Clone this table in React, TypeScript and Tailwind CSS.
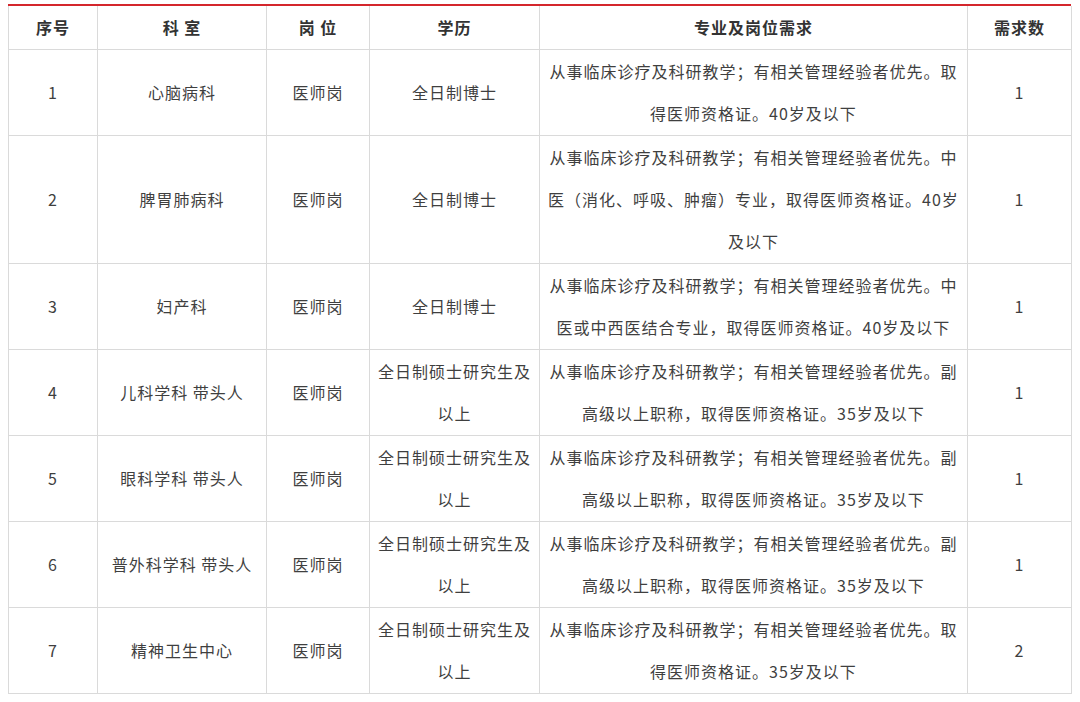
type Row = {
  no: string;
  dept: string;
  post: string;
  edu: string[];
  req: string[];
  count: string;
};

const rows: Row[] = [
  {
    no: "1",
    dept: "心脑病科",
    post: "医师岗",
    edu: ["全日制博士"],
    req: ["从事临床诊疗及科研教学；有相关管理经验者优先。取", "得医师资格证。40岁及以下"],
    count: "1",
  },
  {
    no: "2",
    dept: "脾胃肺病科",
    post: "医师岗",
    edu: ["全日制博士"],
    req: [
      "从事临床诊疗及科研教学；有相关管理经验者优先。中",
      "医（消化、呼吸、肿瘤）专业，取得医师资格证。40岁",
      "及以下",
    ],
    count: "1",
  },
  {
    no: "3",
    dept: "妇产科",
    post: "医师岗",
    edu: ["全日制博士"],
    req: ["从事临床诊疗及科研教学；有相关管理经验者优先。中", "医或中西医结合专业，取得医师资格证。40岁及以下"],
    count: "1",
  },
  {
    no: "4",
    dept: "儿科学科 带头人",
    post: "医师岗",
    edu: ["全日制硕士研究生及", "以上"],
    req: ["从事临床诊疗及科研教学；有相关管理经验者优先。副", "高级以上职称，取得医师资格证。35岁及以下"],
    count: "1",
  },
  {
    no: "5",
    dept: "眼科学科 带头人",
    post: "医师岗",
    edu: ["全日制硕士研究生及", "以上"],
    req: ["从事临床诊疗及科研教学；有相关管理经验者优先。副", "高级以上职称，取得医师资格证。35岁及以下"],
    count: "1",
  },
  {
    no: "6",
    dept: "普外科学科 带头人",
    post: "医师岗",
    edu: ["全日制硕士研究生及", "以上"],
    req: ["从事临床诊疗及科研教学；有相关管理经验者优先。副", "高级以上职称，取得医师资格证。35岁及以下"],
    count: "1",
  },
  {
    no: "7",
    dept: "精神卫生中心",
    post: "医师岗",
    edu: ["全日制硕士研究生及", "以上"],
    req: ["从事临床诊疗及科研教学；有相关管理经验者优先。取", "得医师资格证。35岁及以下"],
    count: "2",
  },
];

const cell = "border border-[#dadada] text-center align-middle p-0";

function Lines({ lines }: { lines: string[] }) {
  return (
    <>
      {lines.map((l, i) => (
        <span key={i} className="block whitespace-nowrap">
          {l}
        </span>
      ))}
    </>
  );
}

export default function App() {
  return (
    <div
      className="min-h-screen bg-white pt-[4px] pl-[8px] text-[16px] leading-[42px] tracking-[1px] text-[#3f3f3f]"
      style={{ fontFamily: '"Noto Sans CJK SC", "Noto Sans", sans-serif' }}
    >
      <div className="w-[1063px]">
        <div className="h-[2px] bg-[#d4262c]" />
        <table className="w-[1063px] table-fixed border-collapse">
          <colgroup>
            <col className="w-[89px]" />
            <col className="w-[169px]" />
            <col className="w-[103px]" />
            <col className="w-[170px]" />
            <col className="w-[428px]" />
            <col className="w-[104px]" />
          </colgroup>
          <thead>
            <tr className="h-[43px] font-bold text-[#333333]">
              <th className={`${cell} border-t-0`}>序号</th>
              <th className={`${cell} border-t-0`}>科 室</th>
              <th className={`${cell} border-t-0`}>岗 位</th>
              <th className={`${cell} border-t-0`}>学历</th>
              <th className={`${cell} border-t-0`}>专业及岗位需求</th>
              <th className={`${cell} border-t-0`}>需求数</th>
            </tr>
          </thead>
          <tbody>
            {rows.map((r) => (
              <tr key={r.no} className={r.req.length === 3 ? "h-[128px]" : "h-[86px]"}>
                <td className={cell}>{r.no}</td>
                <td className={cell}>{r.dept}</td>
                <td className={cell}>{r.post}</td>
                <td className={cell}>
                  <Lines lines={r.edu} />
                </td>
                <td className={cell}>
                  <Lines lines={r.req} />
                </td>
                <td className={cell}>{r.count}</td>
              </tr>
            ))}
          </tbody>
        </table>
      </div>
    </div>
  );
}
